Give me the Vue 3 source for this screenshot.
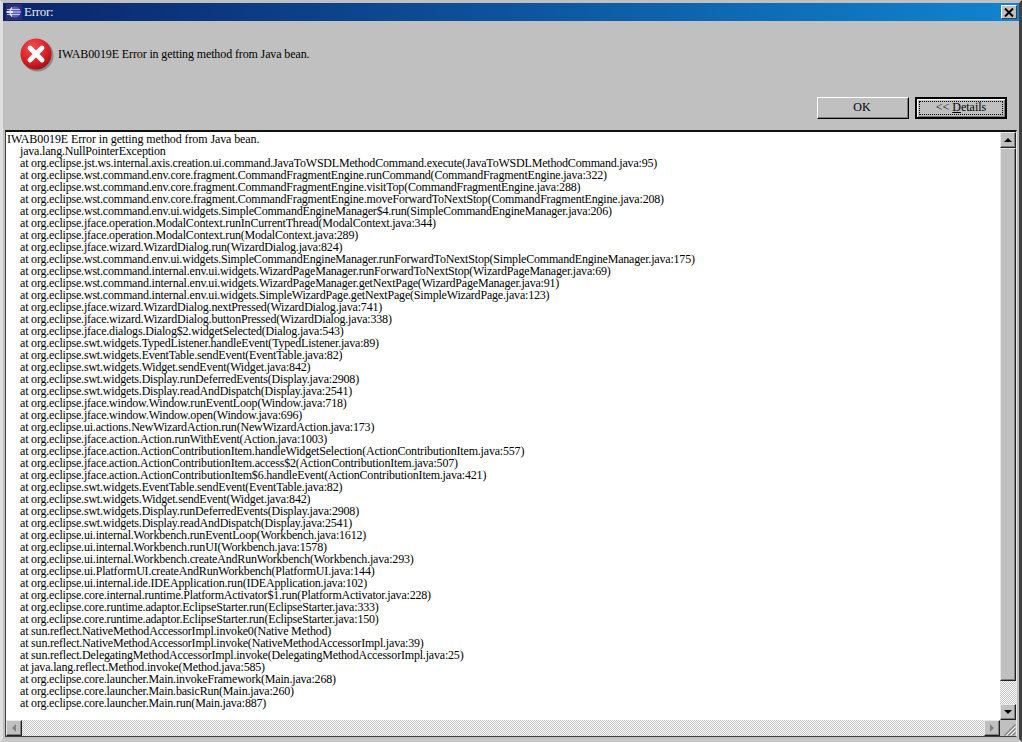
<script setup>
const lines = [
  "java.lang.NullPointerException",
  "at org.eclipse.jst.ws.internal.axis.creation.ui.command.JavaToWSDLMethodCommand.execute(JavaToWSDLMethodCommand.java:95)",
  "at org.eclipse.wst.command.env.core.fragment.CommandFragmentEngine.runCommand(CommandFragmentEngine.java:322)",
  "at org.eclipse.wst.command.env.core.fragment.CommandFragmentEngine.visitTop(CommandFragmentEngine.java:288)",
  "at org.eclipse.wst.command.env.core.fragment.CommandFragmentEngine.moveForwardToNextStop(CommandFragmentEngine.java:208)",
  "at org.eclipse.wst.command.env.ui.widgets.SimpleCommandEngineManager$4.run(SimpleCommandEngineManager.java:206)",
  "at org.eclipse.jface.operation.ModalContext.runInCurrentThread(ModalContext.java:344)",
  "at org.eclipse.jface.operation.ModalContext.run(ModalContext.java:289)",
  "at org.eclipse.jface.wizard.WizardDialog.run(WizardDialog.java:824)",
  "at org.eclipse.wst.command.env.ui.widgets.SimpleCommandEngineManager.runForwardToNextStop(SimpleCommandEngineManager.java:175)",
  "at org.eclipse.wst.command.internal.env.ui.widgets.WizardPageManager.runForwardToNextStop(WizardPageManager.java:69)",
  "at org.eclipse.wst.command.internal.env.ui.widgets.WizardPageManager.getNextPage(WizardPageManager.java:91)",
  "at org.eclipse.wst.command.internal.env.ui.widgets.SimpleWizardPage.getNextPage(SimpleWizardPage.java:123)",
  "at org.eclipse.jface.wizard.WizardDialog.nextPressed(WizardDialog.java:741)",
  "at org.eclipse.jface.wizard.WizardDialog.buttonPressed(WizardDialog.java:338)",
  "at org.eclipse.jface.dialogs.Dialog$2.widgetSelected(Dialog.java:543)",
  "at org.eclipse.swt.widgets.TypedListener.handleEvent(TypedListener.java:89)",
  "at org.eclipse.swt.widgets.EventTable.sendEvent(EventTable.java:82)",
  "at org.eclipse.swt.widgets.Widget.sendEvent(Widget.java:842)",
  "at org.eclipse.swt.widgets.Display.runDeferredEvents(Display.java:2908)",
  "at org.eclipse.swt.widgets.Display.readAndDispatch(Display.java:2541)",
  "at org.eclipse.jface.window.Window.runEventLoop(Window.java:718)",
  "at org.eclipse.jface.window.Window.open(Window.java:696)",
  "at org.eclipse.ui.actions.NewWizardAction.run(NewWizardAction.java:173)",
  "at org.eclipse.jface.action.Action.runWithEvent(Action.java:1003)",
  "at org.eclipse.jface.action.ActionContributionItem.handleWidgetSelection(ActionContributionItem.java:557)",
  "at org.eclipse.jface.action.ActionContributionItem.access$2(ActionContributionItem.java:507)",
  "at org.eclipse.jface.action.ActionContributionItem$6.handleEvent(ActionContributionItem.java:421)",
  "at org.eclipse.swt.widgets.EventTable.sendEvent(EventTable.java:82)",
  "at org.eclipse.swt.widgets.Widget.sendEvent(Widget.java:842)",
  "at org.eclipse.swt.widgets.Display.runDeferredEvents(Display.java:2908)",
  "at org.eclipse.swt.widgets.Display.readAndDispatch(Display.java:2541)",
  "at org.eclipse.ui.internal.Workbench.runEventLoop(Workbench.java:1612)",
  "at org.eclipse.ui.internal.Workbench.runUI(Workbench.java:1578)",
  "at org.eclipse.ui.internal.Workbench.createAndRunWorkbench(Workbench.java:293)",
  "at org.eclipse.ui.PlatformUI.createAndRunWorkbench(PlatformUI.java:144)",
  "at org.eclipse.ui.internal.ide.IDEApplication.run(IDEApplication.java:102)",
  "at org.eclipse.core.internal.runtime.PlatformActivator$1.run(PlatformActivator.java:228)",
  "at org.eclipse.core.runtime.adaptor.EclipseStarter.run(EclipseStarter.java:333)",
  "at org.eclipse.core.runtime.adaptor.EclipseStarter.run(EclipseStarter.java:150)",
  "at sun.reflect.NativeMethodAccessorImpl.invoke0(Native Method)",
  "at sun.reflect.NativeMethodAccessorImpl.invoke(NativeMethodAccessorImpl.java:39)",
  "at sun.reflect.DelegatingMethodAccessorImpl.invoke(DelegatingMethodAccessorImpl.java:25)",
  "at java.lang.reflect.Method.invoke(Method.java:585)",
  "at org.eclipse.core.launcher.Main.invokeFramework(Main.java:268)",
  "at org.eclipse.core.launcher.Main.basicRun(Main.java:260)",
  "at org.eclipse.core.launcher.Main.run(Main.java:887)"
]
</script>

<template>
  <div class="window">
    <div class="titlebar">
      <svg class="app-icon" width="16" height="16" viewBox="0 0 16 16">
        <rect width="16" height="16" fill="#2c2f78" />
        <circle cx="9" cy="8" r="5.5" fill="#5a62b8" />
        <path d="M1 5.5h13M0 8h15M1 10.5h13" stroke="#b9c4ee" stroke-width="1" />
        <path d="M1 8h6" stroke="#ffffff" stroke-width="1.6" />
        <path d="M6 3.5a6 6 0 0 0 0 9" stroke="#e6e8f8" stroke-width="1.2" fill="none" />
      </svg>
      <span class="title">Error:</span>
      <div class="close">
        <svg width="10" height="9" viewBox="0 0 10 9">
          <path d="M1 0.5l8 8M9 0.5l-8 8" stroke="#000" stroke-width="2" fill="none" />
        </svg>
      </div>
    </div>

    <div class="summary">
      <svg class="err" width="34" height="34" viewBox="0 0 34 34">
        <defs>
          <radialGradient id="red" cx="0.4" cy="0.3" r="0.8">
            <stop offset="0" stop-color="#f2504e" />
            <stop offset="0.6" stop-color="#d81f26" />
            <stop offset="1" stop-color="#8e0c12" />
          </radialGradient>
        </defs>
        <circle cx="17.5" cy="17.5" r="16" fill="#8a8a8a" />
        <circle cx="16" cy="16" r="15.5" fill="url(#red)" />
        <path d="M10 10l12 12M22 10l-12 12" stroke="#fff" stroke-width="4.8" stroke-linecap="round" fill="none" />
      </svg>
      <span class="msg">IWAB0019E Error in getting method from Java bean.</span>
    </div>

    <div class="actions">
      <button class="btn" type="button"><span class="ok">OK</span></button>
      <button class="btn default" type="button">
        <span class="focus">&lt;&lt; <u>D</u>etails</span>
      </button>
    </div>

    <div class="pane">
      <div class="upper">
        <div class="log">
          <div class="line head">IWAB0019E Error in getting method from Java bean.</div>
          <div v-for="(l, i) in lines" :key="i" class="line indent">{{ l }}</div>
        </div>
        <div class="vscroll">
          <div class="sbtn"><i class="tri up"></i></div>
          <div class="thumb"></div>
          <div class="track"></div>
          <div class="sbtn"><i class="tri down"></i></div>
        </div>
      </div>
      <div class="hscroll">
        <div class="sbtn"><i class="tri left"></i></div>
        <div class="track"></div>
        <div class="sbtn"><i class="tri right"></i></div>
        <div class="corner">
          <svg width="16" height="16" viewBox="0 0 16 16">
            <path d="M15.5 4.5L4.5 15.5M15.5 8.5L8.5 15.5M15.5 12.5L12.5 15.5" stroke="#808080" stroke-width="1.2" />
            <path d="M15.5 6.5L6.5 15.5M15.5 10.5L10.5 15.5" stroke="#fff" stroke-width="1" />
          </svg>
        </div>
      </div>
    </div>
  </div>
</template>

<style>
html, body { margin: 0; background: #c0c0c0; }
</style>

<style scoped>
.window {
  width: 1022px;
  height: 742px;
  box-sizing: border-box;
  background: #c0c0c0;
  border: 3px solid #c0c0c0;
  border-left-color: #dfdfdf;
  border-right-color: #404040;
  border-bottom-color: #c8c8c8;
  font-family: "Liberation Serif", "Noto Sans CJK TC", serif;
  font-size: 12px;
  color: #000;
  display: flex;
  flex-direction: column;
  overflow: hidden;
}
.titlebar {
  height: 18px;
  flex: none;
  display: flex;
  align-items: center;
  background: linear-gradient(90deg, #0a246a, #1084d0);
  padding: 0 1px 0 3px;
}
.app-icon { flex: none; }
.title {
  margin-left: 2px;
  color: #e8e8f0;
  font-size: 13px;
  letter-spacing: -0.3px;
  flex: 1;
}
.close {
  width: 16px;
  height: 14px;
  margin-right: 1px;
  box-sizing: border-box;
  background: #c0c0c0;
  border: 1px solid;
  border-color: #fff #404040 #404040 #fff;
  display: flex;
  align-items: center;
  justify-content: center;
}
.summary {
  height: 76px;
  flex: none;
  display: flex;
  align-items: flex-start;
  padding: 17px 0 0 17px;
  box-sizing: border-box;
}
.err { flex: none; }
.msg { margin-left: 4px; margin-top: 9px; line-height: 14px; letter-spacing: -0.12px; }
.actions {
  height: 33px;
  flex: none;
  display: flex;
  justify-content: flex-end;
  gap: 6px;
  padding-right: 12px;
  box-sizing: border-box;
}
.btn {
  width: 92px;
  height: 22px;
  padding: 0;
  background: #c0c0c0;
  border: 1px solid;
  border-color: #fff #000 #000 #fff;
  box-shadow: inset -1px -1px 0 #808080;
  font: inherit;
  color: #000;
  display: flex;
  align-items: center;
  justify-content: center;
}
.ok { display: block; margin: 0 2px 2px 0; }
.default {
  border: 2px solid #000;
  box-shadow: inset 1px 1px 0 #fff, inset -1px -1px 0 #808080;
}
.focus {
  width: 84px;
  height: 14px;
  line-height: 11px;
  border: 1px dotted #000;
  box-sizing: border-box;
  text-align: center;
  display: block;
}
.pane {
  height: 607px;
  margin: 0 2px;
  flex: none;
  box-sizing: border-box;
  background: #fff;
  border-top: 2px solid #111;
  border-left: 1px solid #404040;
  border-right: 1px solid #e8e8e8;
  border-bottom: 1px solid #404040;
  display: flex;
  flex-direction: column;
}
.upper { flex: 1; min-height: 0; display: flex; }
.log {
  flex: 1;
  min-width: 0;
  padding: 1px 0 0 1px;
  overflow: hidden;
}
.line {
  height: 12px;
  line-height: 12px;
  white-space: pre;
  font-size: 12px;
  letter-spacing: -0.19px;
}
.head { letter-spacing: -0.1px; }
.indent { padding-left: 13px; }
.vscroll {
  width: 16px;
  flex: none;
  display: flex;
  flex-direction: column;
}
.sbtn {
  width: 16px;
  height: 16px;
  flex: none;
  box-sizing: border-box;
  background: #c0c0c0;
  border: 1px solid;
  border-color: #e8e8e8 #202020 #202020 #e8e8e8;
  box-shadow: inset -1px -1px 0 #808080;
  display: flex;
  align-items: center;
  justify-content: center;
}
.thumb {
  height: 533px;
  flex: none;
  box-sizing: border-box;
  background: #c0c0c0;
  border: 1px solid;
  border-color: #e8e8e8 #202020 #202020 #e8e8e8;
  box-shadow: inset -1px -1px 0 #808080;
}
.track {
  flex: 1;
  background: repeating-conic-gradient(#fff 0 25%, #c0c0c0 0 50%) 0 0 / 2px 2px;
}
.hscroll {
  height: 16px;
  flex: none;
  display: flex;
}
.corner { width: 16px; height: 16px; flex: none; background: #c0c0c0; }
.tri { display: block; width: 0; height: 0; border: 4px solid transparent; }
.tri.up { border-top-width: 0; border-bottom-color: #000; }
.tri.down { border-bottom-width: 0; border-top-color: #000; }
.tri.left { border-left-width: 0; border-right-color: #808080; }
.tri.right { border-right-width: 0; border-left-color: #808080; }
</style>
